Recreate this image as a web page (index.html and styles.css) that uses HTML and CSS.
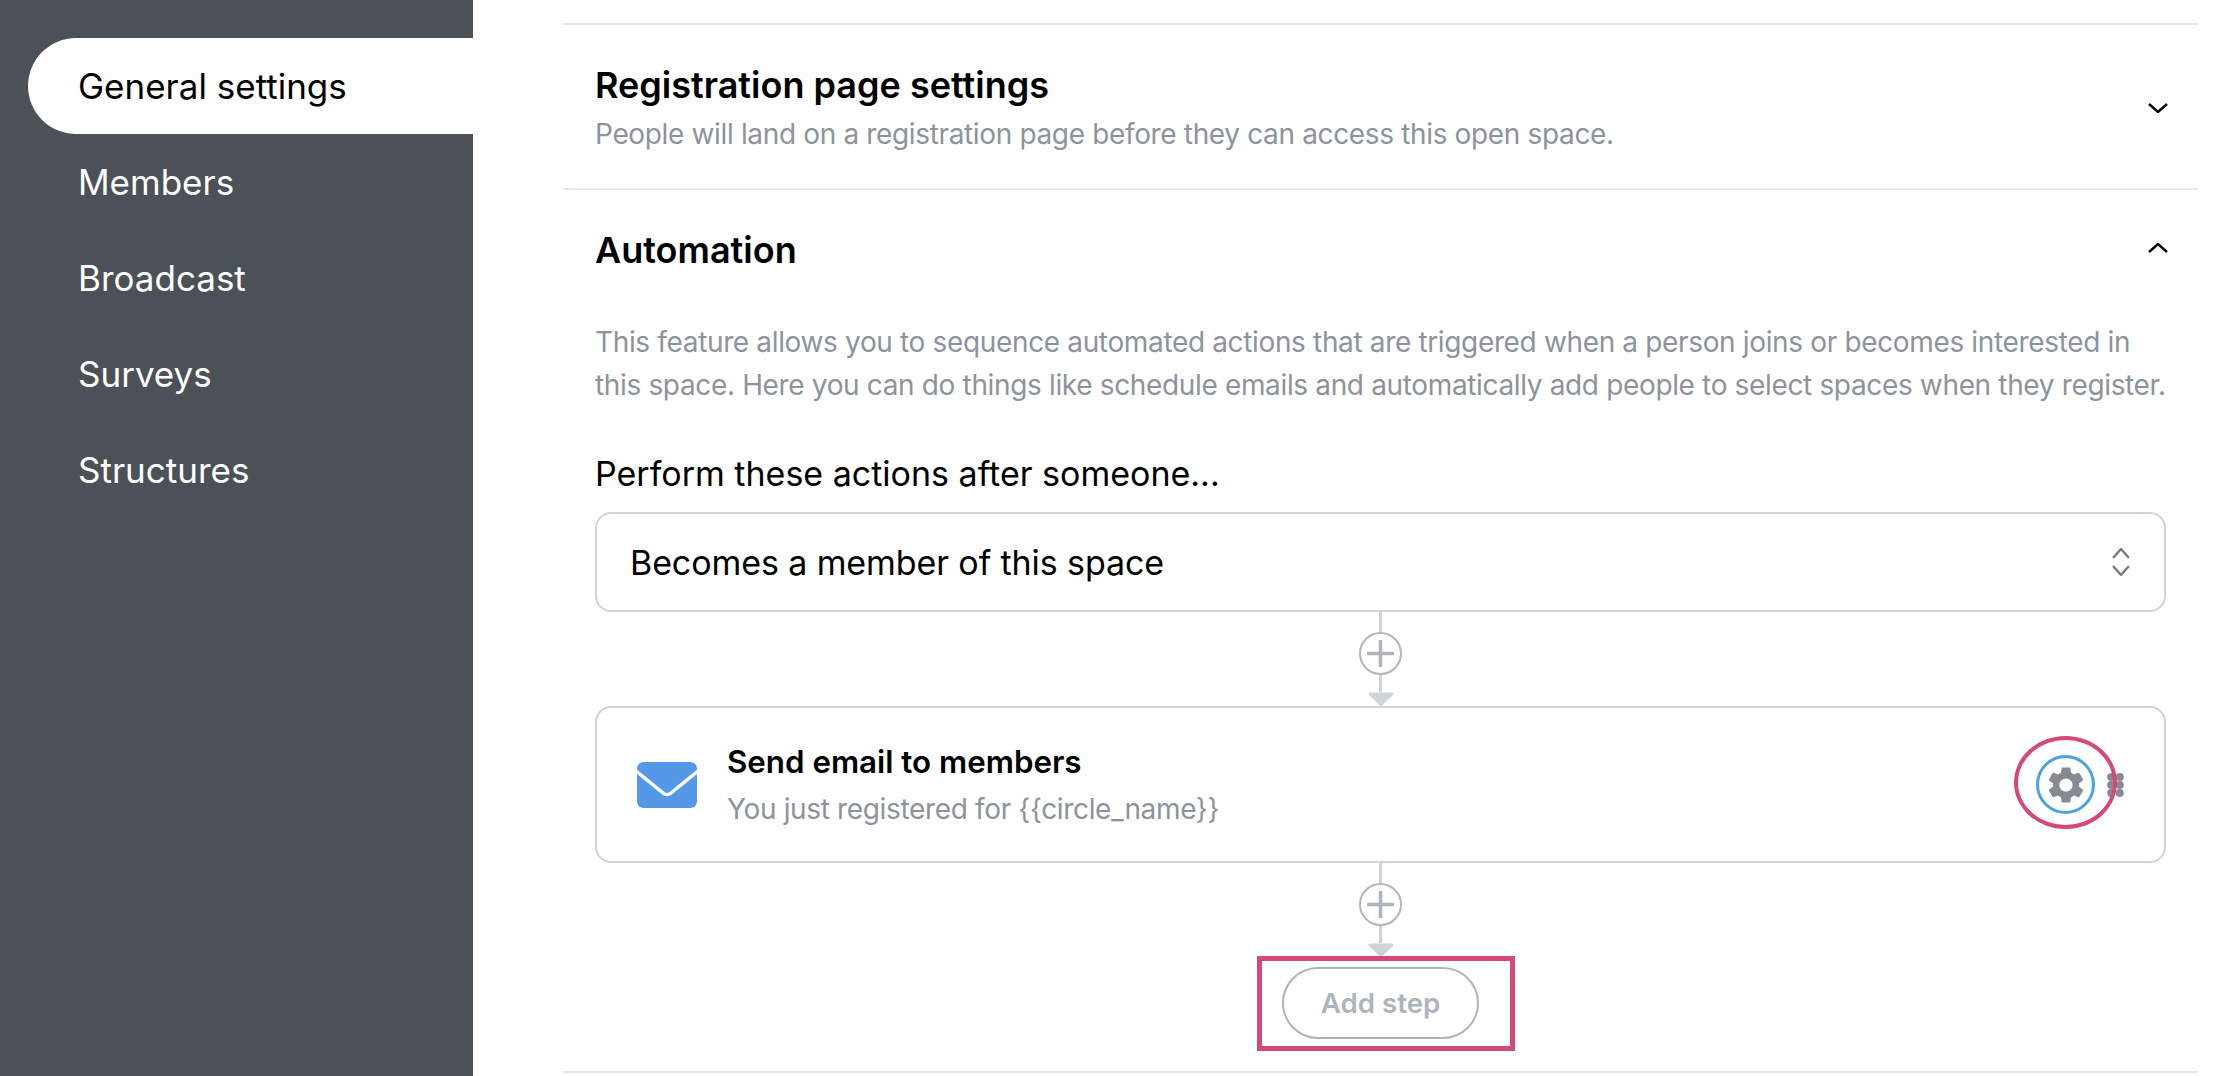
FILE: index.html
```html
<!DOCTYPE html>
<html lang="en">
<head>
<meta charset="utf-8">
<title>Space settings</title>
<link rel="stylesheet" href="styles.css">
</head>
<body>
<div class="page">
  <nav class="sidebar">
    <a class="nav-item active">General settings</a>
    <a class="nav-item">Members</a>
    <a class="nav-item">Broadcast</a>
    <a class="nav-item">Surveys</a>
    <a class="nav-item">Structures</a>
  </nav>
  <main class="main">
    <section class="section first">
      <div class="section-head">
        <div>
          <h2 class="section-title">Registration page settings</h2>
          <p class="section-desc">People will land on a registration page before they can access this open space.</p>
        </div>
        <svg class="chev" viewBox="0 0 20 10" width="20" height="10"><path d="M1 1l9 8 9-8"/></svg>
      </div>
    </section>
    <section class="section">
      <div class="section-head auto-head">
        <h2 class="section-title">Automation</h2>
        <svg class="chev" viewBox="0 0 20 10" width="20" height="10"><path d="M1 9l9-8 9 8"/></svg>
      </div>
      <p class="auto-desc">This feature allows you to sequence automated actions that are triggered when a person joins or becomes interested in<br>this space. Here you can do things like schedule emails and automatically add people to select spaces when they register.</p>
      <div class="label">Perform these actions after someone...</div>
      <div class="select">
        <span>Becomes a member of this space</span>
        <svg class="updown" viewBox="0 0 18 28" width="18" height="28"><path d="M1 10l8-9 8 9M1 18l8 9 8-9"/></svg>
      </div>
      <div class="connector">
        <span class="line top"></span>
        <span class="plus"><svg viewBox="0 0 27 27" width="27" height="27"><path d="M13.5 1v25M1 13.5h25"/></svg></span>
        <span class="line bottom"></span>
        <svg class="arrow" viewBox="0 0 26 14" width="26" height="14"><path d="M2 2h22l-11 10.500z"/></svg>
      </div>
      <div class="card">
        <svg class="mail" viewBox="0 0 60 46" width="60" height="46"><path class="mail-body" d="M6 0h48a6 6 0 0 1 6 6v34a6 6 0 0 1-6 6H6a6 6 0 0 1-6-6V6a6 6 0 0 1 6-6z"/><path class="mail-flap" d="M-1 9l27 22a6 6 0 0 0 8 0L61 9"/></svg>
        <div class="card-text">
          <div class="card-title">Send email to members</div>
          <div class="card-sub">You just registered for {{circle_name}}</div>
        </div>
        <div class="card-actions">
          <div class="gear-btn">
            <svg viewBox="0 0 24 24" width="44" height="44"><path d="M19.14 12.94c.04-.3.06-.61.06-.94 0-.32-.02-.64-.07-.94l2.03-1.58a.49.49 0 0 0 .12-.61l-1.92-3.32a.488.488 0 0 0-.59-.22l-2.39.96c-.5-.38-1.03-.7-1.62-.94l-.36-2.54a.484.484 0 0 0-.48-.41h-3.84c-.24 0-.43.17-.47.41l-.36 2.54c-.59.24-1.13.57-1.62.94l-2.39-.96c-.22-.08-.47 0-.59.22L2.74 8.87c-.12.21-.08.47.12.61l2.03 1.58c-.05.3-.09.63-.09.94s.02.64.07.94l-2.03 1.58a.49.49 0 0 0-.12.61l1.92 3.32c.12.22.37.29.59.22l2.39-.96c.5.38 1.03.7 1.62.94l.36 2.54c.05.24.24.41.48.41h3.84c.24 0 .44-.17.47-.41l.36-2.54c.59-.24 1.13-.56 1.62-.94l2.39.96c.22.08.47 0 .59-.22l1.92-3.32c.12-.22.07-.47-.12-.61l-2.01-1.58zM12 15.6c-1.98 0-3.6-1.62-3.6-3.600s1.62-3.600 3.600-3.600 3.600 1.620 3.600 3.600-1.620 3.600-3.600 3.600z"/></svg>
            <span class="pink-ellipse"></span>
          </div>
          <svg class="dots" viewBox="0 0 17 24" width="17" height="24"><circle cx="4.200" cy="4" r="4"/><circle cx="12.800" cy="4" r="4"/><circle cx="4.200" cy="12" r="4"/><circle cx="12.800" cy="12" r="4"/><circle cx="4.200" cy="20" r="4"/><circle cx="12.800" cy="20" r="4"/></svg>
        </div>
      </div>
      <div class="connector">
        <span class="line top"></span>
        <span class="plus"><svg viewBox="0 0 27 27" width="27" height="27"><path d="M13.5 1v25M1 13.5h25"/></svg></span>
        <span class="line bottom"></span>
        <svg class="arrow" viewBox="0 0 26 14" width="26" height="14"><path d="M2 2h22l-11 10.500z"/></svg>
      </div>
      <div class="add-row">
        <div class="add-wrap">
          <button class="add-btn" type="button">Add step</button>
          <span class="pink-box"></span>
        </div>
      </div>
    </section>
  </main>
</div>
</body>
</html>
```
FILE: styles.css
```css
* { box-sizing: border-box; }
html, body { margin: 0; padding: 0; height: 1076px; overflow: hidden; background: #fff; }
body { font-family: Inter, "Liberation Sans", sans-serif; color: #000; }
.page { display: flex; height: 1076px; overflow: hidden; }

.sidebar { width: 473px; flex: none; background: #4c5158; padding: 38px 0 0 28px; display: flex; flex-direction: column; }
.nav-item { display: flex; align-items: center; height: 96px; padding-left: 50px; color: #fff; font-size: 35px; }
.nav-item.active { background: #fff; color: #000; border-radius: 48px 0 0 48px; }

.main { width: 1635px; margin-left: 90px; padding-top: 23px; flex: none; }
.section { border-bottom: 2px solid #e3e6ea; padding: 0 32px 0 32px; }
.section.first { border-top: 2px solid #e3e6ea; padding-top: 38px; padding-bottom: 34px; height: 167px; }
.section-head { display: flex; justify-content: space-between; }
.section-head .chev { margin-right: -2px; margin-top: 40px; }
.auto-head { padding-top: 38px; }
.section-head.auto-head .chev { margin-top: 15px; }
.section-title { margin: 0; font-size: 36px; line-height: 44px; font-weight: 600; }
.section-desc { margin: 7px 0 0; font-size: 28px; line-height: 40px; letter-spacing: -0.35px; color: #8d939c; }
.auto-desc { margin: 49px 0 0; font-size: 28px; line-height: 43px; letter-spacing: -0.35px; color: #8d939c; white-space: nowrap; }
.label { margin-top: 45px; font-size: 34px; line-height: 44px; }

.select { margin-top: 16px; height: 100px; border: 2px solid #cfd4da; border-radius: 16px; display: flex; align-items: center; justify-content: space-between; padding: 0 34px 0 33px; font-size: 34px; letter-spacing: -0.1px; }
.updown { fill: none; stroke: #757b85; stroke-width: 2.4; }

.connector { display: flex; flex-direction: column; align-items: center; height: 94px; }
.line { width: 3px; background: #cfd4da; flex: none; }
.line.top { height: 20px; }
.line.bottom { height: 17px; }
.plus { width: 43px; height: 43px; flex: none; border: 2px solid #b0b6be; border-radius: 50%; display: flex; align-items: center; justify-content: center; }
.plus svg { fill: none; stroke: #aeb4bd; stroke-width: 3.6; stroke-linecap: round; }
.arrow { flex: none; fill: #cfd4da; stroke: #cfd4da; stroke-width: 3; stroke-linejoin: round; }
.chev { fill: none; stroke: #000; stroke-width: 2.400; flex: none; }

.card { height: 157px; border: 2px solid #cfd4da; border-radius: 16px; display: flex; align-items: center; padding: 0 40px 0 40px; }
.mail { flex: none; overflow: hidden; border-radius: 6px; }
.mail-body { fill: #5499e8; }
.mail-flap { fill: none; stroke: #fff; stroke-width: 3.500; }
.card-text { margin-left: 30px; flex: 1; }
.card-title { font-size: 31.300px; line-height: 40px; font-weight: 600; padding-top: 2px; }
.card-sub { margin-top: 7px; font-size: 28px; line-height: 40px; letter-spacing: -0.35px; color: #8d939c; }
.card-actions { display: flex; align-items: center; gap: 12px; }
.gear-btn { position: relative; width: 59px; height: 59px; border: 3px solid #4aa3df; border-radius: 50%; display: flex; align-items: center; justify-content: center; }
.gear-btn svg { fill: #858a93; }
.pink-ellipse { position: absolute; left: -25px; top: -22px; width: 103px; height: 93px; border: 4.5px solid #d5487a; border-radius: 50%; }
.dots { fill: #858a93; flex: none; }

.add-row { display: flex; justify-content: center; padding: 10px 0 32px; }
.add-wrap { position: relative; }
.add-btn { display: block; width: 197px; height: 72px; background: #fff; border: 2px solid #aeb4bd; border-radius: 36px; color: #aeb4bd; font: 600 27.700px Inter, "Liberation Sans", sans-serif; }
.pink-box { position: absolute; left: -25px; top: -11px; width: 258px; height: 95px; border: 5px solid #d5487a; }
```
